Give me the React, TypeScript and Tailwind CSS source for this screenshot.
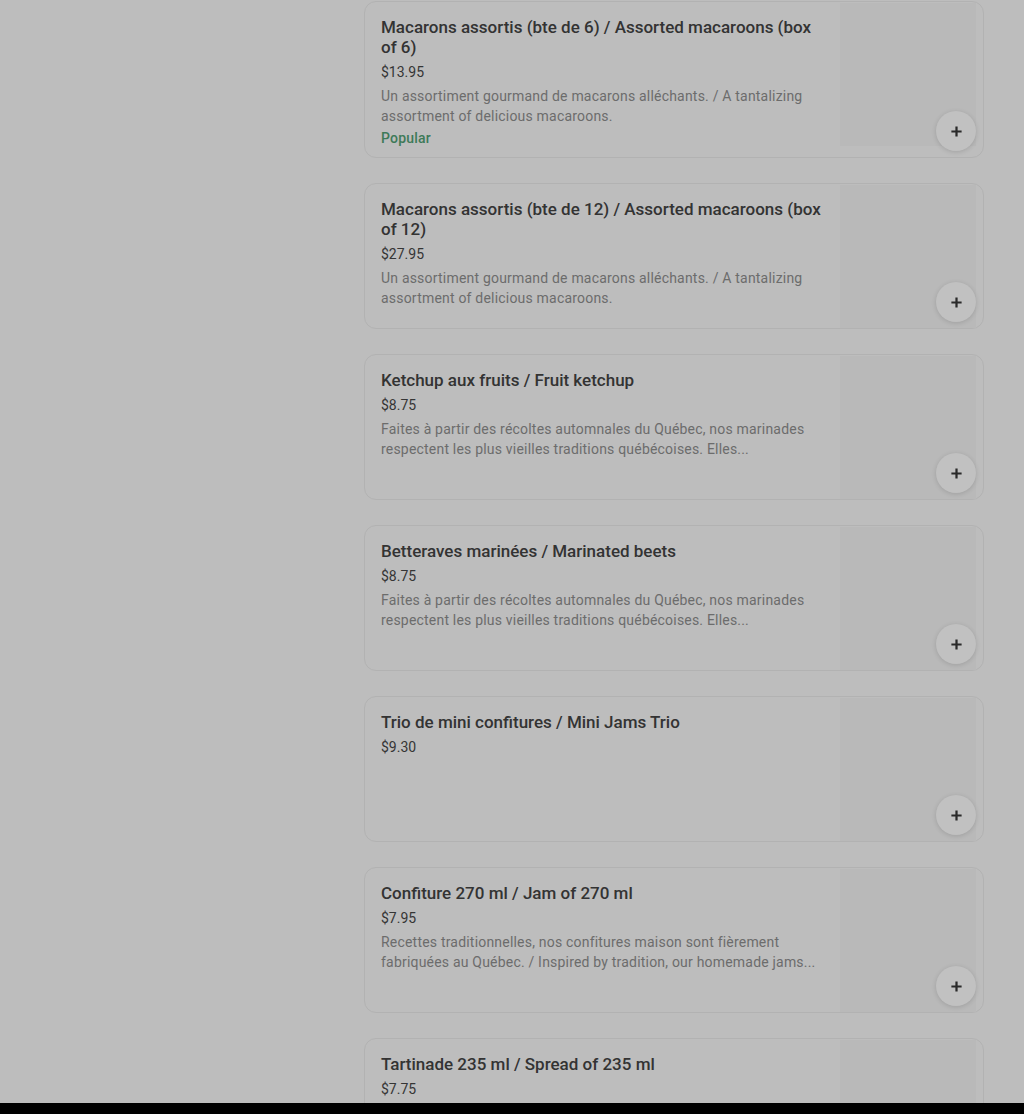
import React from "react";

type Item = {
  title: string;
  price: string;
  desc?: string;
  popular?: boolean;
};

const items: Item[] = [
  {
    title: "Macarons assortis (bte de 6) / Assorted macaroons (box of 6)",
    price: "$13.95",
    desc: "Un assortiment gourmand de macarons alléchants. / A tantalizing assortment of delicious macaroons.",
    popular: true,
  },
  {
    title: "Macarons assortis (bte de 12) / Assorted macaroons (box of 12)",
    price: "$27.95",
    desc: "Un assortiment gourmand de macarons alléchants. / A tantalizing assortment of delicious macaroons.",
  },
  {
    title: "Ketchup aux fruits / Fruit ketchup",
    price: "$8.75",
    desc: "Faites à partir des récoltes automnales du Québec, nos marinades respectent les plus vieilles traditions québécoises. Elles...",
  },
  {
    title: "Betteraves marinées / Marinated beets",
    price: "$8.75",
    desc: "Faites à partir des récoltes automnales du Québec, nos marinades respectent les plus vieilles traditions québécoises. Elles...",
  },
  {
    title: "Trio de mini confitures / Mini Jams Trio",
    price: "$9.30",
  },
  {
    title: "Confiture 270 ml / Jam of 270 ml",
    price: "$7.95",
    desc: "Recettes traditionnelles, nos confitures maison sont fièrement fabriquées au Québec. / Inspired by tradition, our homemade jams...",
  },
  {
    title: "Tartinade 235 ml / Spread of 235 ml",
    price: "$7.75",
  },
];

const PlusIcon = () => (
  <svg width="13" height="13" viewBox="0 0 14 14" fill="none">
    <path d="M7 1.5v11M1.5 7h11" stroke="#2a2a2a" strokeWidth="2.4" />
  </svg>
);

const ItemCard = ({ item }: { item: Item }) => (
  <div className="relative flex min-h-[146px] rounded-xl border border-[#b2b2b2]">
    {/* Text */}
    <div className="w-[459px] pl-4 pt-[15px] pb-[9px]">
      <h3 className="text-[17px] leading-5 font-medium text-[#333333]">{item.title}</h3>
      <p className="mt-[5px] text-sm leading-5 text-[#353535]">{item.price}</p>
      {item.desc && (
        <p className="mt-1 text-sm leading-5 tracking-[0.2px] text-[#6c6c6c]">{item.desc}</p>
      )}
      {item.popular && (
        <p className="mt-[2px] text-sm leading-5 font-medium tracking-[0.2px] text-[#3d7a58]">Popular</p>
      )}
    </div>
    {/* Image placeholder */}
    <div className="ml-4 mt-px h-[143px] w-[136px] bg-[#b9b9b9]" />
    <button className="absolute right-[7px] bottom-[6px] flex h-10 w-10 items-center justify-center rounded-full bg-[#c1c1c1] shadow-[0_1px_5px_rgba(0,0,0,0.14)]">
      <PlusIcon />
    </button>
  </div>
);

export default function App() {
  return (
    <div
      className="flex h-[1114px] flex-col overflow-hidden bg-[#bdbdbd]"
      style={{ fontFamily: "Roboto, 'Noto Sans', sans-serif" }}
    >
      <div className="flex-1 overflow-hidden">
        <div className="ml-[364px] flex w-[620px] flex-col gap-[25px] pt-px">
          {items.map((it) => (
            <ItemCard key={it.title} item={it} />
          ))}
        </div>
      </div>
      <div className="h-[11px] bg-black" />
    </div>
  );
}
